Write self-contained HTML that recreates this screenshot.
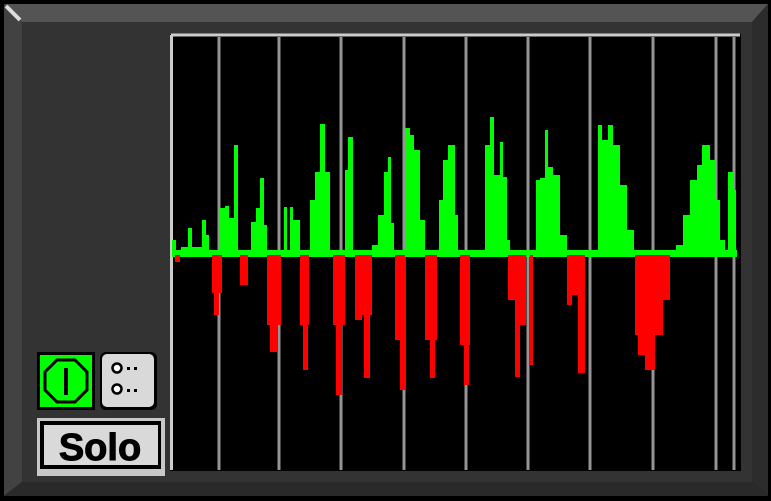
<!DOCTYPE html>
<html><head><style>
html,body{margin:0;padding:0;background:#000;width:771px;height:501px;overflow:hidden}
</style></head><body>
<svg width="771" height="501" viewBox="0 0 771 501" xmlns="http://www.w3.org/2000/svg" style="display:block">
<rect x="0" y="0" width="771" height="501" fill="#000"/>
<polygon points="4,4 768,4 752,22 22,22" fill="#545454"/>
<polygon points="4,4 22,22 22,482 4,496" fill="#424242"/>
<polygon points="768,4 768,496 752,482 752,22" fill="#2c2c2c"/>
<polygon points="4,496 768,496 752,482 22,482" fill="#2a2a2a"/>
<rect x="22" y="22" width="730" height="460" fill="#333"/>
<line x1="6" y1="6" x2="20" y2="20" stroke="#ddd" stroke-width="4"/>
<rect x="170" y="34" width="571" height="437" fill="#000"/>
<line x1="171" y1="35" x2="740" y2="35" stroke="#ccc" stroke-width="3"/>
<line x1="171.5" y1="35" x2="171.5" y2="470" stroke="#ccc" stroke-width="3"/>
<g stroke="#959595" stroke-width="3">
<line x1="219" y1="37" x2="219" y2="470"/><line x1="279" y1="37" x2="279" y2="470"/>
<line x1="341" y1="37" x2="341" y2="470"/><line x1="404" y1="37" x2="404" y2="470"/>
<line x1="466" y1="37" x2="466" y2="470"/><line x1="528" y1="37" x2="528" y2="470"/>
<line x1="590" y1="37" x2="590" y2="470"/><line x1="653" y1="37" x2="653" y2="470"/>
<line x1="716" y1="37" x2="716" y2="470"/><line x1="734" y1="37" x2="734" y2="470"/>
</g>
<g fill="#00ff00">
<rect x="172" y="250" width="565" height="7"/>
<rect x="172" y="240" width="4" height="17"/>
<rect x="181" y="247" width="28" height="10"/>
<rect x="188" y="228" width="4" height="29"/><rect x="202" y="220" width="4" height="37"/><rect x="206" y="235" width="3" height="22"/>
<rect x="220" y="208" width="5" height="49"/><rect x="225" y="206" width="4" height="51"/><rect x="229" y="218" width="5" height="39"/><rect x="234" y="145" width="4" height="112"/>
<rect x="251" y="222" width="5" height="35"/><rect x="256" y="208" width="4" height="49"/><rect x="260" y="178" width="4" height="79"/><rect x="264" y="225" width="3" height="32"/>
<rect x="284" y="207" width="3" height="50"/><rect x="290" y="207" width="3" height="50"/><rect x="293" y="220" width="7" height="37"/>
<rect x="310" y="200" width="5" height="57"/><rect x="315" y="172" width="5" height="85"/><rect x="320" y="124" width="5" height="133"/><rect x="325" y="172" width="5" height="85"/>
<rect x="345" y="170" width="3" height="87"/><rect x="348" y="137" width="5" height="120"/>
<rect x="372" y="245" width="6" height="12"/><rect x="378" y="215" width="6" height="42"/><rect x="384" y="172" width="4" height="85"/><rect x="388" y="157" width="3" height="100"/><rect x="391" y="223" width="3" height="34"/>
<rect x="405" y="128" width="5" height="129"/><rect x="410" y="135" width="4" height="122"/><rect x="414" y="150" width="6" height="107"/><rect x="420" y="220" width="5" height="37"/>
<rect x="439" y="200" width="4" height="57"/><rect x="443" y="160" width="5" height="97"/><rect x="448" y="145" width="7" height="112"/><rect x="455" y="215" width="3" height="42"/>
<rect x="485" y="145" width="5" height="112"/><rect x="490" y="117" width="4" height="140"/><rect x="494" y="175" width="6" height="82"/><rect x="500" y="142" width="3" height="115"/><rect x="503" y="177" width="4" height="80"/><rect x="507" y="240" width="3" height="17"/>
<rect x="536" y="180" width="4" height="77"/><rect x="540" y="178" width="5" height="79"/><rect x="545" y="130" width="3" height="127"/><rect x="548" y="167" width="5" height="90"/><rect x="553" y="175" width="7" height="82"/><rect x="560" y="235" width="7" height="22"/>
<rect x="598" y="125" width="4" height="132"/><rect x="602" y="140" width="6" height="117"/><rect x="608" y="125" width="5" height="132"/><rect x="613" y="145" width="7" height="112"/><rect x="620" y="185" width="7" height="72"/><rect x="627" y="230" width="7" height="27"/>
<rect x="676" y="245" width="7" height="12"/><rect x="683" y="215" width="7" height="42"/><rect x="690" y="180" width="7" height="77"/><rect x="697" y="165" width="5" height="92"/><rect x="702" y="145" width="8" height="112"/><rect x="710" y="160" width="5" height="97"/><rect x="715" y="200" width="5" height="57"/><rect x="720" y="240" width="5" height="17"/><rect x="728" y="172" width="5" height="85"/><rect x="733" y="190" width="3" height="67"/>
</g>
<g fill="#ff0000">
<rect x="175" y="255" width="5" height="7"/>
<rect x="212" y="255" width="10" height="38"/><rect x="214" y="255" width="5" height="60"/>
<rect x="240" y="255" width="8" height="30"/>
<rect x="267" y="255" width="14" height="70"/><rect x="270" y="255" width="7" height="97"/>
<rect x="300" y="255" width="9" height="70"/><rect x="303" y="255" width="5" height="115"/>
<rect x="333" y="255" width="12" height="70"/><rect x="336" y="255" width="6" height="140"/>
<rect x="355" y="255" width="7" height="65"/><rect x="362" y="255" width="10" height="60"/><rect x="364" y="255" width="6" height="123"/>
<rect x="395" y="255" width="10" height="85"/><rect x="400" y="255" width="5" height="135"/>
<rect x="425" y="255" width="12" height="85"/><rect x="430" y="255" width="5" height="123"/>
<rect x="460" y="255" width="10" height="90"/><rect x="464" y="255" width="5" height="130"/>
<rect x="508" y="255" width="15" height="45"/><rect x="515" y="255" width="5" height="122"/><rect x="520" y="255" width="6" height="70"/><rect x="530" y="255" width="3" height="110"/>
<rect x="567" y="255" width="5" height="50"/><rect x="572" y="255" width="6" height="40"/><rect x="578" y="255" width="7" height="118"/>
<rect x="635" y="255" width="35" height="45"/><rect x="635" y="255" width="28" height="80"/><rect x="638" y="255" width="10" height="100"/><rect x="645" y="255" width="10" height="115"/>
</g>
<rect x="37" y="352" width="58" height="58" fill="#000"/>
<rect x="40" y="355" width="52" height="52" fill="#00ff00"/>
<polygon points="57,360 75,360 87,372 87,390 75,402 57,402 45,390 45,372" fill="none" stroke="#000" stroke-width="3"/>
<line x1="66" y1="368" x2="66" y2="395" stroke="#000" stroke-width="4"/>
<rect x="100" y="352" width="57" height="58" rx="6" fill="#000"/>
<rect x="102" y="354" width="52" height="53" rx="5" fill="#d9d9d9"/>
<circle cx="117" cy="368" r="4.5" fill="#fff" stroke="#000" stroke-width="2.5"/>
<circle cx="117" cy="389" r="4.5" fill="#fff" stroke="#000" stroke-width="2.5"/>
<g fill="#000"><rect x="127" y="367" width="3" height="3"/><rect x="134" y="367" width="3" height="3"/><rect x="127" y="389" width="3" height="3"/><rect x="134" y="389" width="3" height="3"/></g>
<rect x="37" y="418" width="128" height="58" fill="#c8c8c8"/>
<rect x="40" y="421" width="121" height="48" fill="#000"/>
<rect x="44" y="425" width="114" height="40" fill="#d9d9d9"/>
<text x="100" y="460" text-anchor="middle" font-family="Liberation Sans, sans-serif" font-weight="bold" font-size="38" fill="#000" stroke="#000" stroke-width="1">Solo</text>
</svg>
</body></html>
